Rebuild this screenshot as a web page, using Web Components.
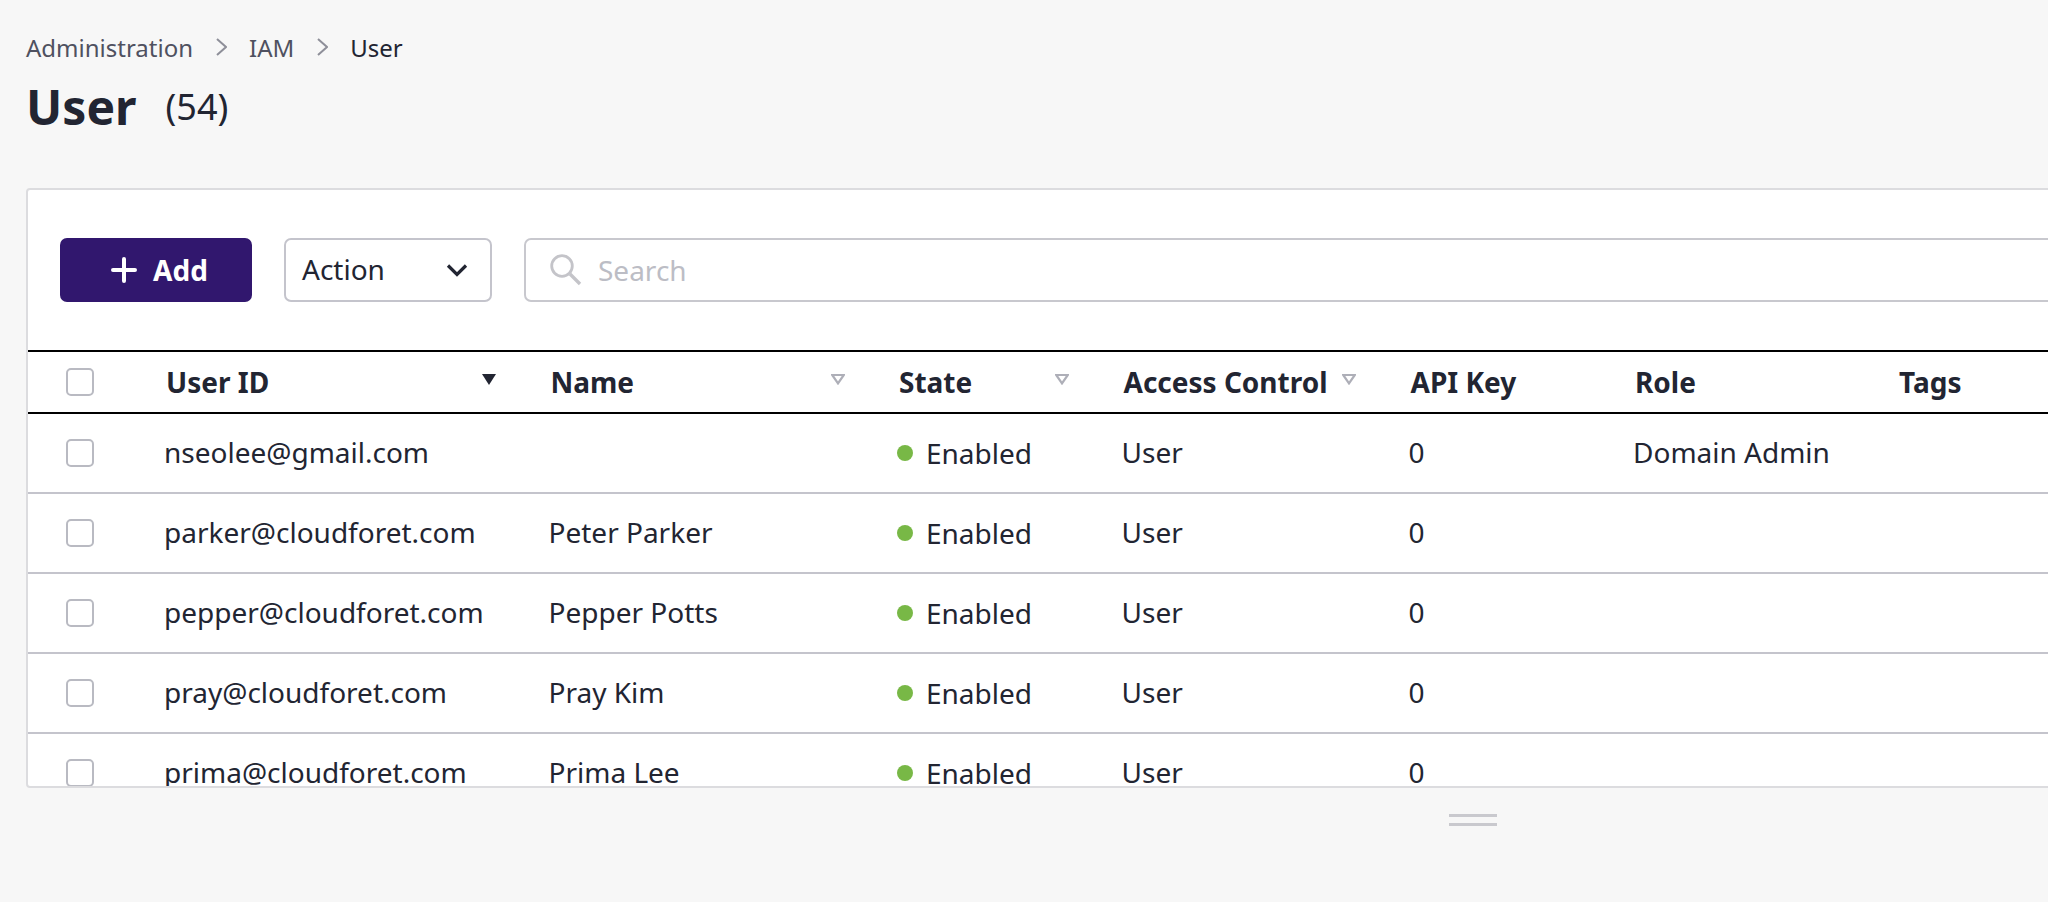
<!doctype html>
<html><head><meta charset="utf-8">
<style>
html,body{margin:0;padding:0;height:902px;overflow:hidden;background:#f7f7f7;font-family:"Noto Sans",sans-serif;color:#222532}
app-page{display:block}
</style></head><body>
<app-page>
  <app-breadcrumb slot="crumb"></app-breadcrumb>
  <page-title count="(54)">User</page-title>
  <user-card></user-card>
</app-page>
<script>
const mk=(name,html,setup)=>customElements.define(name,class extends HTMLElement{
  constructor(){super();this.attachShadow({mode:'open'}).innerHTML=typeof html==='function'?html(this):html;}
  connectedCallback(){if(setup)setup(this);}
});
mk('app-page',`<style>:host{display:block;padding:25px 0 0 26px;width:2400px;box-sizing:border-box}</style><slot name="crumb"></slot><slot></slot>`);
const CHEV=`<svg viewBox="0 0 11 18"><path d="M1 1 10 9 1 17" fill="none" stroke="#8e8f99" stroke-width="2"/></svg>`;
mk('app-breadcrumb',`<style>:host{display:flex;align-items:center;height:44px;font-size:24px;color:#4f5160}
span.c{color:#222532}svg{width:11px;height:18px;margin:0 22.5px;display:block}</style>
<span>Administration</span>${CHEV}<span>IAM</span>${CHEV}<span class="c">User</span>`);
mk('page-title',el=>`<style>:host{display:flex;align-items:center;height:60px;padding-top:8px;margin-bottom:51px}
b{font-size:48px;font-weight:700;line-height:60px}span{font-size:36px;line-height:60px;margin-left:29px}</style>
<b><slot></slot></b><span>${el.getAttribute('count')}</span>`);
mk('add-button',`<style>:host{display:flex;align-items:center;justify-content:center;gap:16px;box-sizing:border-box;padding-left:7px;width:192px;height:64px;background:#31176e;color:#fff;border-radius:7px;font-size:28px;font-weight:700;flex:none}
svg{width:26px;height:26px;display:block}</style>
<svg viewBox="0 0 26 26"><path d="M13 2v22M2 13h22" stroke="#fff" stroke-width="4" stroke-linecap="round"/></svg><span>Add</span>`);
mk('action-select',`<style>:host{display:flex;align-items:center;justify-content:space-between;box-sizing:border-box;width:208px;height:64px;border:2px solid #c4c4cc;border-radius:7px;background:#fff;padding:0 22px 0 16px;font-size:28px;flex:none}
span{padding-bottom:2px}svg{width:22px;height:14px;display:block}</style><span>Action</span>
<svg viewBox="0 0 22 14"><path d="M2 2.5 11 11.5 20 2.5" fill="none" stroke="#222532" stroke-width="3.2"/></svg>`);
mk('search-box',`<style>:host{display:flex;align-items:center;box-sizing:border-box;flex:1;height:64px;border:2px solid #c8c8ce;border-radius:7px;background:#fff;padding-left:24px;font-size:28px;color:#bcbdc5}
svg{width:32px;height:32px;display:block;margin-right:16px}</style>
<svg viewBox="0 0 32 32"><circle cx="12" cy="12" r="10.3" fill="none" stroke="#c4c4c9" stroke-width="2.8"/><path d="M20 20 30 30" stroke="#c4c4c9" stroke-width="3.4"/></svg><span>Search</span>`);
mk('tool-bar',`<style>:host{display:flex;gap:32px;padding:48px 0 48px 32px;align-items:center}</style><add-button></add-button><action-select></action-select><search-box></search-box>`);
mk('check-box',`<style>:host{display:block;box-sizing:border-box;width:28px;height:28px;border:2px solid #b9bac2;border-radius:5px;background:#fff}</style>`);
mk('state-label',`<style>:host{display:flex;align-items:center;gap:13px}i{display:block;width:16px;height:16px;border-radius:50%;background:#78b846}</style><i></i><slot></slot>`);
const COLS='grid-template-columns:136px 384.5px 348.5px 224.5px 287px 224.5px 264px 1fr';
mk('head-cell',el=>{const s=el.getAttribute('sort');return `<style>:host{display:flex;align-items:center;justify-content:space-between;padding:0 52.5px 0 2px;font-weight:700;min-width:0}
svg{width:14px;height:11px;display:block;margin-top:-6px}</style><span><slot></slot></span>${s==='on'?'<svg viewBox="0 0 14 11"><path d="M0 0h14L7 11z" fill="#222532"/></svg>':s==='off'?'<svg viewBox="0 0 14 11"><path d="M1.2 1h11.6L7 9.4z" fill="none" stroke="#aeafb8" stroke-width="2.2"/></svg>':''}`});
mk('table-head',`<style>:host{display:grid;${COLS};height:60px;align-items:stretch;border-top:2px solid #000;border-bottom:2px solid #000;font-size:28px}
.c{display:flex;align-items:center;padding-left:38px}</style>
<div class="c"><check-box></check-box></div><head-cell sort="on">User ID</head-cell><head-cell sort="off">Name</head-cell><head-cell sort="off">State</head-cell><head-cell sort="off">Access Control</head-cell><head-cell>API Key</head-cell><head-cell>Role</head-cell><head-cell>Tags</head-cell>`);
mk('table-row',el=>{const a=k=>el.getAttribute(k)||'';return `<style>:host{display:grid;${COLS};height:78px;align-items:center;border-bottom:2px solid #c4c4cc;font-size:28px;white-space:nowrap}
div{padding-bottom:2px}.c{padding-left:38px;padding-bottom:0;display:flex}.s{padding-bottom:0}</style>
<div class="c"><check-box></check-box></div><div>${a('uid')}</div><div>${a('name')}</div><div class="s"><state-label>Enabled</state-label></div><div>User</div><div>0</div><div>${a('role')}</div><div></div>`});
mk('user-card',`<style>:host{display:block;box-sizing:border-box;height:600px;border:2px solid #dcdcdf;border-radius:4px 0 0 4px;background:#fff;overflow:hidden}</style>
<tool-bar></tool-bar><table-head></table-head>
<table-row uid="nseolee@gmail.com" role="Domain Admin"></table-row>
<table-row uid="parker@cloudforet.com" name="Peter Parker"></table-row>
<table-row uid="pepper@cloudforet.com" name="Pepper Potts"></table-row>
<table-row uid="pray@cloudforet.com" name="Pray Kim"></table-row>
<table-row uid="prima@cloudforet.com" name="Prima Lee"></table-row>`);
mk('resize-handle',`<style>:host{display:block;position:absolute;left:1449px;top:814px;width:48px;height:12px;box-sizing:border-box;border-top:3px solid #c9c9ce;border-bottom:3px solid #c9c9ce}</style>`);
document.querySelector('app-page').appendChild(document.createElement('resize-handle'));
</script>
</body></html>
